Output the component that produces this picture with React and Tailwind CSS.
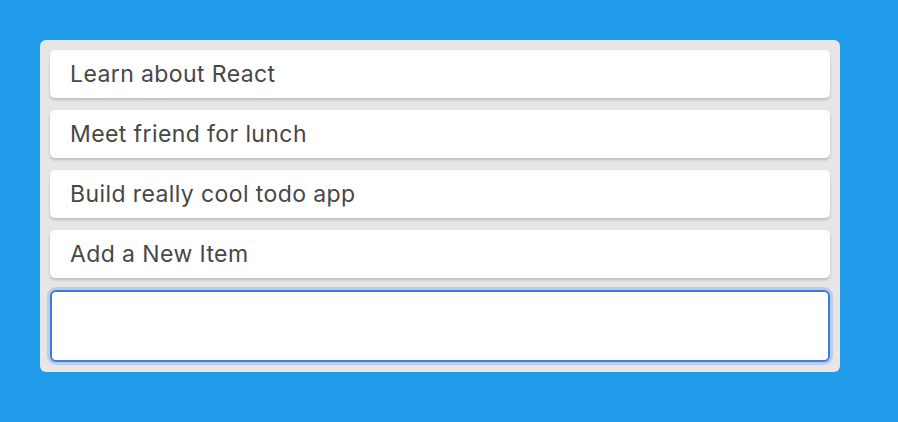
const ITEMS = ['Learn about React', 'Meet friend for lunch', 'Build really cool todo app', 'Add a New Item'];

export default function App() {
  return (
    <div className="min-h-[422px] bg-[#1f9bea] p-10 font-['Inter','Helvetica_Neue','Liberation_Sans',sans-serif]">
      <div className="flex w-[800px] flex-col gap-3 rounded-[6px] bg-[#e6e6e6] p-2.5">
        {ITEMS.map(item => (
          <div
            key={item}
            className="flex h-12 items-center rounded-[5px] bg-white px-5 text-[23px] tracking-[0.4px] text-[#474747] shadow-[0_2px_3px_rgba(0,0,0,0.18)]"
          >
            {item}
          </div>
        ))}
        <input
          type="text"
          className="h-[72px] w-full rounded-[6px] border-2 border-[#3a7be0] bg-white px-4 text-[23px] outline-none ring-[3px] ring-[#bccce6]"
        />
      </div>
    </div>
  );
}
